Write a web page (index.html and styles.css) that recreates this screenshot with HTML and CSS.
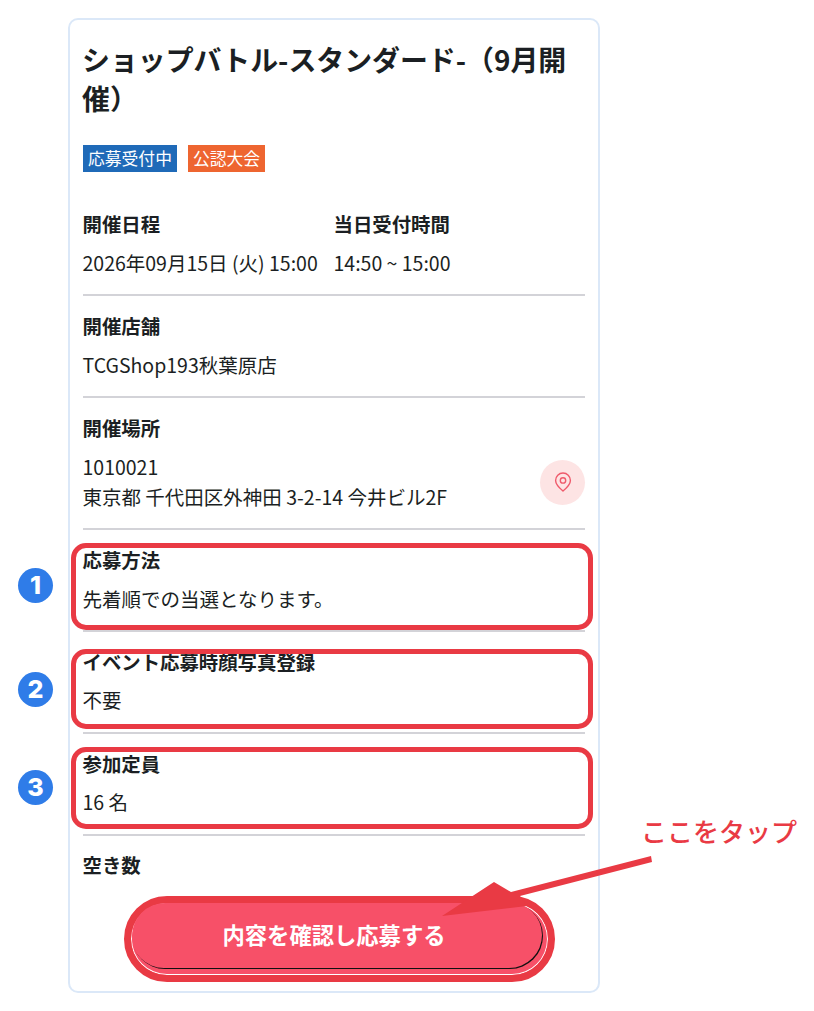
FILE: index.html
```html
<!DOCTYPE html>
<html lang="ja">
<head>
<meta charset="utf-8">
<title>ショップバトル</title>
<link rel="stylesheet" href="styles.css">
</head>
<body>
<main class="stage">
  <section class="card">
    <h1 class="title">ショップバトル-スタンダード-（9月開催）</h1>
    <div class="tags">
      <span class="tag tag-blue">応募受付中</span>
      <span class="tag tag-orange">公認大会</span>
    </div>
    <div class="row row-first row-split">
      <div class="col-date">
        <div class="label">開催日程</div>
        <div class="value">2026年09月15日 (火) 15:00</div>
      </div>
      <div>
        <div class="label">当日受付時間</div>
        <div class="value">14:50 ~ 15:00</div>
      </div>
    </div>
    <div class="row">
      <div class="label">開催店舗</div>
      <div class="value">TCGShop193秋葉原店</div>
    </div>
    <div class="row row-place">
      <div>
        <div class="label">開催場所</div>
        <div class="value">1010021<br>東京都 千代田区外神田 3-2-14 今井ビル2F</div>
      </div>
      <span class="pin">
        <svg width="18" height="20" viewBox="0 0 18 20" fill="none" stroke="#ef5a6b" stroke-width="1.4">
          <path d="M9 19C5 15.6 1.6 12.6 1.6 8.4a7.4 7.4 0 0 1 14.8 0C16.4 12.6 13 15.6 9 19z"/>
          <circle cx="9" cy="8.4" r="2.7"/>
        </svg>
      </span>
    </div>
    <div class="row row-tight">
      <div class="label">応募方法</div>
      <div class="value">先着順での当選となります。</div>
    </div>
    <div class="row">
      <div class="label">イベント応募時顔写真登録</div>
      <div class="value">不要</div>
    </div>
    <div class="row">
      <div class="label">参加定員</div>
      <div class="value">16 名</div>
    </div>
    <div class="row row-last">
      <div class="label">空き数</div>
    </div>
  </section>

  <div class="mark mark-1"></div>
  <div class="mark mark-2"></div>
  <div class="mark mark-3"></div>
  <span class="num num-1">1</span>
  <span class="num num-2">2</span>
  <span class="num num-3">3</span>

  <div class="cta-ring"><button class="cta" type="button">内容を確認し応募する</button></div>
  <svg class="arrow" width="814" height="1011" viewBox="0 0 814 1011">
    <path d="M651 856 L511 892 L494 882 L442 916 L527 906 L520 896 L652 862 Z" fill="#e93a44"/>
  </svg>
  <span class="tap-note">ここをタップ</span>
</main>
</body>
</html>
```

FILE: styles.css
```css
* { box-sizing: border-box; }
html, body { margin: 0; padding: 0; background: #fff; }
body {
  font-family: "Noto Sans CJK JP", "Noto Sans", sans-serif;
  color: #1b1f23;
}
.stage { position: relative; width: 814px; height: 1011px; overflow: hidden; }
.card {
  position: absolute;
  left: 68px;
  top: 18px;
  width: 532px;
  height: 975px;
  padding: 20px 13px 0;
  border: 2px solid #dbe8f8;
  border-radius: 10px;
  background: #fff;
  overflow: hidden;
}
.title {
  margin: 0 0 0 -1px;
  font-size: 27.9px;
  line-height: 39px;
  font-weight: 700;
}
.tags { display: flex; gap: 11px; margin-top: 27px; }
.tag {
  display: block;
  height: 27px;
  padding: 0 5px;
  font-size: 16.8px;
  line-height: 27px;
  color: #fff;
}
.tag-blue { background: #1f6ab8; }
.tag-orange { background: #ee6530; }
.row {
  padding: 16px 0 16.5px;
  border-bottom: 2px solid #d3d3d8;
}
.row-first { margin-top: 18px; padding-top: 20px; }
.row-split { display: flex; }
.col-date { width: 251px; }
.row-place { display: flex; justify-content: space-between; align-items: flex-end; }
.row-tight { padding-bottom: 16px; }
.row-last { border-bottom: 0; margin-top: -1px; }
.label {
  margin-left: -0.5px;
  font-size: 19.4px;
  line-height: 28px;
  font-weight: 700;
}
.value {
  margin-top: 9.5px;
  margin-left: -0.5px;
  font-size: 19.5px;
  line-height: 30px;
  font-weight: 400;
}
.pin {
  display: flex;
  align-items: center;
  justify-content: center;
  width: 45px;
  height: 45px;
  margin-bottom: 7px;
  border-radius: 50%;
  background: #fde4e4;
}
.mark {
  position: absolute;
  left: 71px;
  width: 522px;
  border: 5.5px solid #e93a44;
  border-radius: 15px;
}
.mark-1 { top: 543px; height: 87px; }
.mark-2 { top: 649px; height: 80px; }
.mark-3 { top: 747px; height: 82px; }
.num {
  position: absolute;
  left: 18px;
  width: 35px;
  height: 35px;
  border-radius: 50%;
  background: #2f7ce8;
  color: #fff;
  font-family: "Inter", "Liberation Sans", sans-serif;
  font-size: 25px;
  line-height: 35px;
  font-weight: 800;
  text-align: center;
}
.num-1 { top: 568px; }
.num-2 { top: 672px; }
.num-3 { top: 770px; }
.cta-ring {
  position: absolute;
  left: 124px;
  top: 896px;
  width: 431px;
  height: 86px;
  padding: 0 0 0 1px;
  border: 7px solid #e93a44;
  border-radius: 43px;
  background: #f75068;
  box-shadow: inset 0 0 0 1px #fff;
}
.cta {
  display: block;
  width: 411px;
  height: 66px;
  padding: 0 7px 4px 0;
  margin: 0;
  border: 0;
  border-radius: 33px;
  background: #f75068;
  box-shadow: inset -1px -1px 0 #111;
  color: #fff;
  font-family: inherit;
  font-size: 22.3px;
  font-weight: 700;
}
.arrow { position: absolute; left: 0; top: 0; pointer-events: none; }
.tap-note {
  position: absolute;
  left: 641px;
  top: 812px;
  font-family: "Noto Sans CJK JP", sans-serif;
  font-size: 26px;
  line-height: 38px;
  font-weight: 500;
  color: #e93a44;
  white-space: nowrap;
}
```
